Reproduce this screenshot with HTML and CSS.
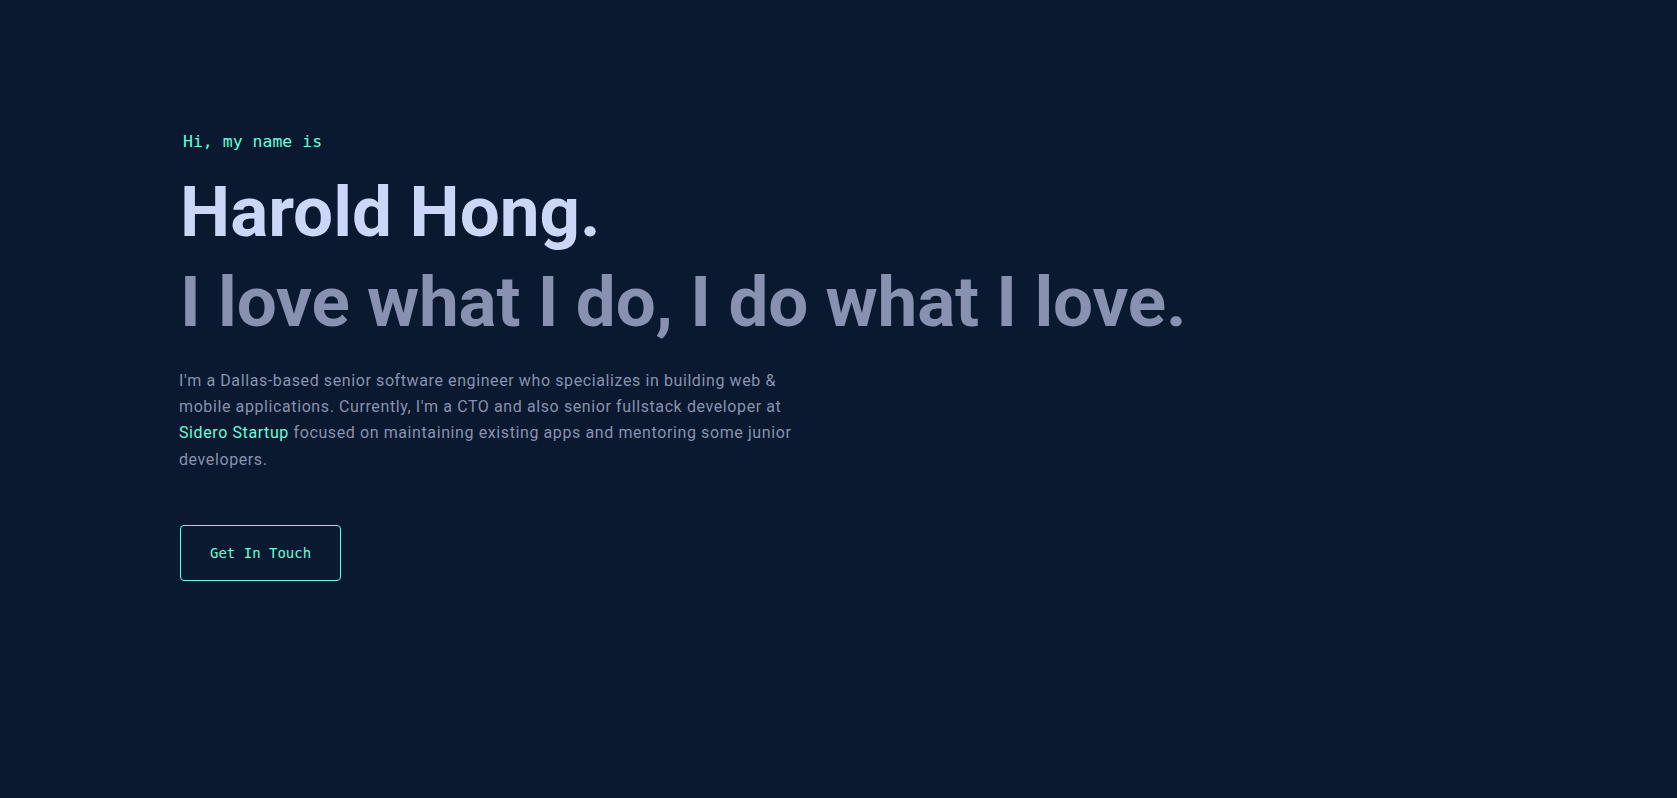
FILE: index.html
```html
<!DOCTYPE html>
<html lang="en">
<head>
<meta charset="utf-8">
<title>Harold Hong</title>
<link rel="stylesheet" href="styles.css">
</head>
<body>
<main class="hero">
  <p class="intro">Hi, my name is</p>
  <h1 class="name">Harold Hong.</h1>
  <h2 class="tagline">I love what I do, I do what I love.</h2>
  <p class="bio">I'm a Dallas-based senior software engineer who specializes in building web &amp; mobile applications. Currently, I'm a CTO and also senior fullstack developer at <a class="link" href="#">Sidero Startup</a> focused on maintaining existing apps and mentoring some junior developers.</p>
  <a class="cta" href="#">Get In Touch</a>
</main>
</body>
</html>
```

FILE: styles.css
```css
html, body {
  margin: 0;
  padding: 0;
  background: #0a192f;
}

body {
  width: 1677px;
  height: 798px;
  overflow: hidden;
  font-family: Roboto, "Liberation Sans", sans-serif;
}

.hero {
  display: flex;
  flex-direction: column;
  align-items: flex-start;
  padding: 132px 0 0 180px;
}

.intro {
  margin: 0 0 15px 3px;
  font-family: "DejaVu Sans Mono", "Liberation Mono", monospace;
  font-size: 16.5px;
  line-height: 20px;
  color: #64ffda;
  font-weight: 400;
}

.name,
.tagline {
  margin: 0;
  font-size: 71px;
  line-height: 90px;
  font-weight: 700;
}

.name {
  color: #ccd6f6;
}

.tagline {
  color: #8892b0;
  letter-spacing: -0.17px;
}

.bio {
  margin: 21px 0 0 -1px;
  max-width: 628px;
  font-size: 16px;
  line-height: 26.2px;
  letter-spacing: 0.6px;
  color: #8892b0;
}

.link {
  color: #64ffda;
  text-decoration: none;
}

.cta {
  margin-top: 52px;
  display: inline-block;
  padding: 20px 29px;
  border: 1px solid #64ffda;
  border-radius: 4px;
  font-family: "DejaVu Sans Mono", "Liberation Mono", monospace;
  font-size: 14px;
  line-height: 14px;
  color: #64ffda;
  text-decoration: none;
}
```
